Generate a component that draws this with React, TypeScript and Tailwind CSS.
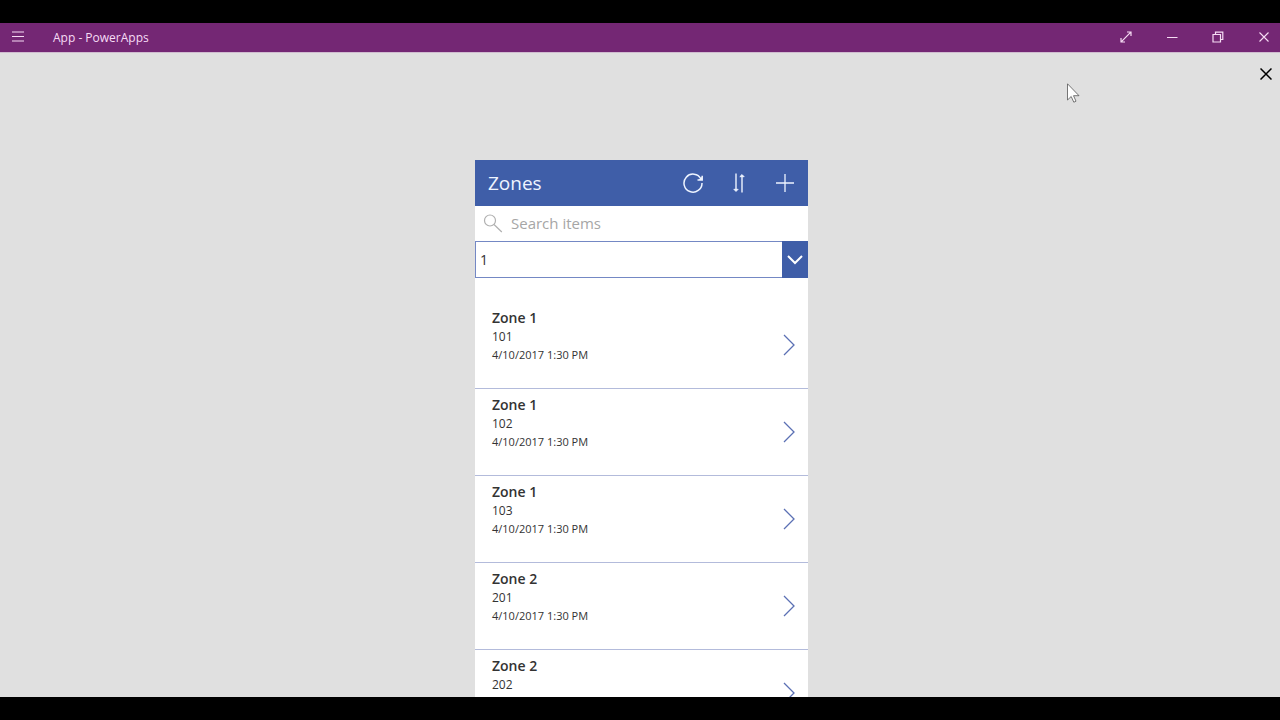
import { useState } from "react";

const items = [
  { id: 101, zone: "Zone 1", date: "4/10/2017 1:30 PM" },
  { id: 102, zone: "Zone 1", date: "4/10/2017 1:30 PM" },
  { id: 103, zone: "Zone 1", date: "4/10/2017 1:30 PM" },
  { id: 201, zone: "Zone 2", date: "4/10/2017 1:30 PM" },
  { id: 202, zone: "Zone 2", date: "4/10/2017 1:30 PM" },
];

function TitleBar() {
  return (
    <header className="flex h-[30px] shrink-0 items-center border-b border-[#d0bcd0] bg-[#742774] text-[#f6dcf4]">
      <button aria-label="Menu" className="flex h-full w-9 items-center justify-center pb-0.5">
        <svg width="12" height="11" viewBox="0 0 12 11" stroke="currentColor" strokeWidth="1.2">
          <path d="M0 1h12M0 5.5h12M0 10h12" />
        </svg>
      </button>
      <h1 className="flex-1 pl-[17px] text-xs">App - PowerApps</h1>
      <div className="flex h-full gap-[14px] pb-0.5">
        <button aria-label="Full screen" className="flex w-8 items-center justify-center">
          <svg width="12" height="12" viewBox="0 0 12 12" fill="none" stroke="currentColor" strokeWidth="1.2">
            <path d="M1.2 10.8l9.6-9.6M7 1h4v4M1 7v4h4" />
          </svg>
        </button>
        <button aria-label="Minimize" className="flex w-8 items-center justify-center">
          <svg width="12" height="12" viewBox="0 0 12 12" stroke="currentColor">
            <path d="M1 6.5h10.5" />
          </svg>
        </button>
        <button aria-label="Restore" className="flex w-8 items-center justify-center">
          <svg width="12" height="12" viewBox="0 0 12 12" fill="none" stroke="currentColor" strokeWidth="1.2">
            <path d="M1 3.5h7.5v7.5h-7.5zM3.5 3.500v-2.300h7.300v7.300h-2.300" />
          </svg>
        </button>
        <button aria-label="Close" className="flex w-8 items-center justify-center">
          <svg width="10" height="10" viewBox="0 0 10 10" stroke="currentColor" strokeWidth="1.1">
            <path d="M0.5 0.5l9 9M9.5 0.5l-9 9" />
          </svg>
        </button>
      </div>
    </header>
  );
}

function ScreenHeader() {
  return (
    <div className="flex h-[46px] items-center bg-[#3f5ea8] pl-[13px] text-[#eef4ff]">
      <h2 className="flex-1 text-[19px]">Zones</h2>
      <button aria-label="Refresh" className="flex w-[46px] justify-center">
        <svg width="22" height="22" viewBox="0 0 22 22" fill="none" stroke="currentColor" strokeWidth="1.5">
          <path d="M19 7A9 9 0 1 0 20 11" />
          <path d="M20.2 3.800v4.200h-4.700" />
          <path d="M20.2 4.600v3.400h-3.600z" fill="currentColor" stroke="none" />
        </svg>
      </button>
      <button aria-label="Sort" className="flex w-[46px] justify-center">
        <svg width="14" height="20" viewBox="0 0 14 20" fill="none" stroke="currentColor" strokeWidth="1.4">
          <path d="M4 0.5v17M10 19.5v-17" />
          <path d="M1.800 16.300h4.400l-2.200 2.200zM7.800 3.700h4.400l-2.200-2.200z" fill="currentColor" strokeWidth="0.8" />
        </svg>
      </button>
      <button aria-label="New item" className="flex w-[46px] justify-center">
        <svg width="18" height="18" viewBox="0 0 18 18" stroke="currentColor" strokeWidth="1.3">
          <path d="M9 0v18M0 9h18" />
        </svg>
      </button>
    </div>
  );
}

export default function App() {
  const [search, setSearch] = useState("");
  const [zone, setZone] = useState("1");
  const shown = items.filter((item) => String(item.id).includes(search));

  return (
    <div className="flex h-screen flex-col bg-black py-[23px] font-['Open_Sans',sans-serif]">
      <TitleBar />
      <main className="relative flex-1 overflow-hidden bg-[#e0e0e0]">
        <div className="flex h-[107px] items-start justify-end px-2 pt-[15px]">
          <button aria-label="Close app">
            <svg width="12" height="12" viewBox="0 0 12 12" stroke="#000" strokeWidth="1.5">
              <path d="M0.5 0.5l11 11M11.5 0.5l-11 11" />
            </svg>
          </button>
        </div>

        <div className="pl-[3px]">
          <section className="mx-auto max-w-[333px] bg-white text-[#333]">
            <ScreenHeader />

            <label className="flex h-[35px] items-center pl-2">
              <svg width="20" height="20" viewBox="0 0 20 20" fill="none" stroke="#b0b0b0" strokeWidth="1.2">
                <circle cx="7" cy="6.500" r="5.500" />
                <path d="M11 10.500l7.800 7.500" />
              </svg>
              <input
                aria-label="Search items"
                placeholder="Search items"
                value={search}
                onChange={(e) => setSearch(e.target.value)}
                className="ml-2 min-w-0 flex-1 text-[15px] outline-none placeholder:text-[#a6a6a6]"
              />
            </label>

            <div className="relative">
              <select
                aria-label="Zone"
                value={zone}
                onChange={(e) => setZone(e.target.value)}
                className="block h-[37px] w-full appearance-none border border-[#7488c4] bg-white pl-1 text-sm"
              >
                <option value="1">1</option>
                <option value="2">2</option>
              </select>
              <span className="pointer-events-none absolute inset-y-0 right-0 flex w-[26px] items-center justify-center bg-[#3f5ea8]">
                <svg width="16" height="10" viewBox="0 0 16 10" fill="none" stroke="#fff" strokeWidth="2">
                  <path d="M1 1l7 7l7-7" />
                </svg>
              </span>
            </div>

            <ul className="pt-6">
              {shown.map((item) => (
                <li key={item.id} className="flex h-[87px] border-b border-[#b3bbdb] pr-[13px] pl-[17px]">
                  <div className="flex-1 pt-1.5">
                    <p className="text-sm leading-[19px] font-semibold">{item.zone}</p>
                    <p className="text-xs leading-5">{item.id}</p>
                    <p className="text-[11px] leading-4">{item.date}</p>
                  </div>
                  <button aria-label={`Open ${item.id}`}>
                    <svg width="12" height="22" viewBox="0 0 12 22" fill="none" stroke="#5b70b4" strokeWidth="1.3">
                      <path d="M1 1l10 10l-10 10" />
                    </svg>
                  </button>
                </li>
              ))}
            </ul>
          </section>
        </div>

        {/* Mouse pointer */}
        <svg
          className="pointer-events-none absolute top-[30px] right-[200px]"
          width="13"
          height="20"
          viewBox="0 0 13 20"
          fill="#fff"
          stroke="#555"
          strokeWidth="0.8"
        >
          <path d="M0.5 0.800v16.200l3.700-3.500l2.600 5.700l2.200-1l-2.500-5.500h5.500z" />
        </svg>
      </main>
    </div>
  );
}
